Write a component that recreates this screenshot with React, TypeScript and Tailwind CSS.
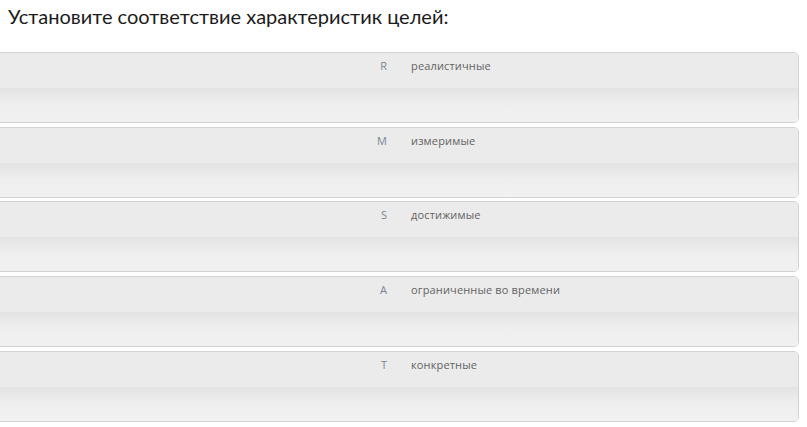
const rows = [
  { letter: 'R', text: 'реалистичные' },
  { letter: 'M', text: 'измеримые' },
  { letter: 'S', text: 'достижимые' },
  { letter: 'A', text: 'ограниченные во времени' },
  { letter: 'T', text: 'конкретные' },
];

export default function App() {
  return (
    <div className="w-[807px] h-[427px] bg-white overflow-hidden font-['Lato','Open_Sans',sans-serif]">
      <h1 className="pl-[8px] pt-[2px] text-[20px] leading-[28px] text-[#1b1b1b]">
        Установите соответствие характеристик целей:
      </h1>

      <div className="mt-[22px] -ml-[5px] w-[804px] flex flex-col gap-[3.7px]">
        {rows.map((row) => (
          <div
            key={row.letter}
            className="h-[71px] rounded-[5px] border border-[#d2d2d2] overflow-hidden flex flex-col"
          >
            <div className="h-[35px] bg-[#ebebeb] flex items-start pt-[5px] text-[11px] leading-[15px] font-['Open_Sans',sans-serif]">
              <div className="w-[396px] text-right pr-[5px] text-[#7a8796]">{row.letter}</div>
              <div className="pl-[19px] text-[#636363] tracking-[0.15px]">{row.text}</div>
            </div>
            <div className="flex-1 bg-gradient-to-b from-[#e3e3e3] via-[#efefef] to-[#f1f1f1]" />
          </div>
        ))}
      </div>
    </div>
  );
}
